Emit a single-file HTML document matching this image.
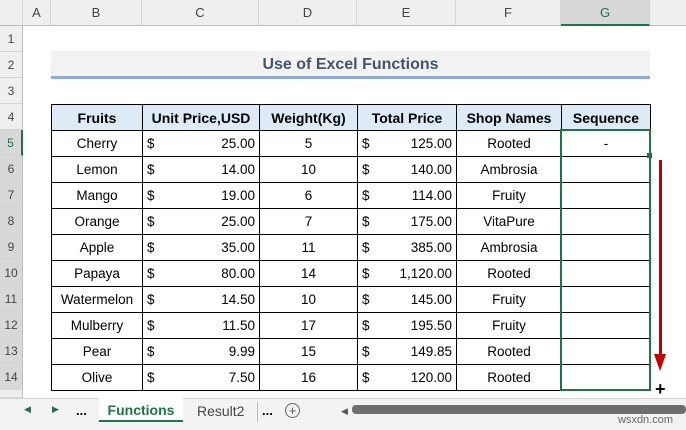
<!DOCTYPE html><html><head><style>
body{margin:0;width:686px;height:429px;overflow:hidden;background:#fff;font-family:"Liberation Sans",Calibri,sans-serif;position:relative}
.a{position:absolute}
.ch{top:0;height:26px;background:#efefef;border-bottom:1px solid #bdbdbd;font-size:13px;color:#444;text-align:center;line-height:26px;box-sizing:border-box;border-right:1px solid #d4d4d4}
.rh{left:0;width:23px;height:26px;background:#efefef;border-bottom:1px solid #d4d4d4;border-right:1px solid #bdbdbd;box-sizing:border-box;font-size:12px;color:#444;text-align:center;line-height:26px}
table{position:absolute;left:51px;top:104px;border-collapse:collapse;font-size:13.5px;table-layout:fixed;width:599px}
tr{height:26px}
td{border:1px solid #000;padding:0 4px;text-align:center;white-space:nowrap;overflow:hidden}
th{border:1px solid #000;background:#ddebf7;font-size:14px;white-space:nowrap;padding:0}
.d{text-align:left}.d span{float:right}
</style></head><body>
<div class="a ch" style="left:0;width:23px"></div>
<div class="a ch" style="left:23px;width:28px">A</div>
<div class="a ch" style="left:51px;width:91px">B</div>
<div class="a ch" style="left:142px;width:117px">C</div>
<div class="a ch" style="left:259px;width:98px">D</div>
<div class="a ch" style="left:357px;width:99px">E</div>
<div class="a ch" style="left:456px;width:105px">F</div>
<div class="a ch" style="left:561px;width:89px;background:#d8d8d8;border-bottom:2px solid #217346;color:#217346">G</div>
<div class="a ch" style="left:650px;width:36px;border-right:none"></div>
<div class="a rh" style="top:26px">1</div><div class="a rh" style="top:52px">2</div><div class="a rh" style="top:78px">3</div><div class="a rh" style="top:104px">4</div>
<div class="a rh" style="top:130px;background:#d8d8d8;border-right:2px solid #217346;color:#217346">5</div>
<div class="a rh" style="top:156px;background:#d8d8d8">6</div><div class="a rh" style="top:182px;background:#d8d8d8">7</div><div class="a rh" style="top:208px;background:#d8d8d8">8</div><div class="a rh" style="top:234px;background:#d8d8d8">9</div><div class="a rh" style="top:260px;background:#d8d8d8">10</div><div class="a rh" style="top:286px;background:#d8d8d8">11</div><div class="a rh" style="top:312px;background:#d8d8d8">12</div><div class="a rh" style="top:338px;background:#d8d8d8">13</div><div class="a rh" style="top:364px;background:#d8d8d8">14</div>
<div class="a rh" style="top:390px;height:8px"></div>
<div class="a" style="left:51px;top:51px;width:599px;height:25px;background:#f2f2f2;border-bottom:3px solid #8ea9db;text-align:center;font-weight:bold;font-size:16px;line-height:27px;color:#44546a">Use of Excel Functions</div>
<table>
<colgroup><col style="width:91px"><col style="width:117px"><col style="width:98px"><col style="width:99px"><col style="width:105px"><col style="width:89px"></colgroup>
<tr><th>Fruits</th><th>Unit Price,USD</th><th>Weight(Kg)</th><th>Total Price</th><th>Shop Names</th><th>Sequence</th></tr>
<tr><td>Cherry</td><td class="d">$<span>25.00</span></td><td>5</td><td class="d">$<span>125.00</span></td><td>Rooted</td><td>-</td></tr>
<tr><td>Lemon</td><td class="d">$<span>14.00</span></td><td>10</td><td class="d">$<span>140.00</span></td><td>Ambrosia</td><td></td></tr>
<tr><td>Mango</td><td class="d">$<span>19.00</span></td><td>6</td><td class="d">$<span>114.00</span></td><td>Fruity</td><td></td></tr>
<tr><td>Orange</td><td class="d">$<span>25.00</span></td><td>7</td><td class="d">$<span>175.00</span></td><td>VitaPure</td><td></td></tr>
<tr><td>Apple</td><td class="d">$<span>35.00</span></td><td>11</td><td class="d">$<span>385.00</span></td><td>Ambrosia</td><td></td></tr>
<tr><td>Papaya</td><td class="d">$<span>80.00</span></td><td>14</td><td class="d">$<span>1,120.00</span></td><td>Rooted</td><td></td></tr>
<tr><td>Watermelon</td><td class="d">$<span>14.50</span></td><td>10</td><td class="d">$<span>145.00</span></td><td>Fruity</td><td></td></tr>
<tr><td>Mulberry</td><td class="d">$<span>11.50</span></td><td>17</td><td class="d">$<span>195.50</span></td><td>Fruity</td><td></td></tr>
<tr><td>Pear</td><td class="d">$<span>9.99</span></td><td>15</td><td class="d">$<span>149.85</span></td><td>Rooted</td><td></td></tr>
<tr><td>Olive</td><td class="d">$<span>7.50</span></td><td>16</td><td class="d">$<span>120.00</span></td><td>Rooted</td><td></td></tr>
</table>
<div class="a" style="left:560px;top:129px;width:87px;height:258px;border:2px solid #217346"></div>
<div class="a" style="left:647px;top:153px;width:5px;height:5px;background:#217346"></div>
<div class="a" style="left:659px;top:160px;width:3px;height:195px;background:#c00000"></div>
<div class="a" style="left:654px;top:354px;width:0;height:0;border-left:6px solid transparent;border-right:6px solid transparent;border-top:17px solid #c00000"></div>
<div class="a" style="left:655px;top:382px;font-size:18px;font-weight:bold;line-height:14px">+</div>
<div class="a" style="left:0;top:398px;width:686px;height:31px;background:#f3f3f3;border-top:1px solid #d4d4d4;font-size:14px;color:#444"></div>
<div class="a" style="left:24px;top:404px;font-size:9px;color:#217346">◀</div>
<div class="a" style="left:52px;top:404px;font-size:9px;color:#217346">▶</div>
<div class="a" style="left:76px;top:403px;font-size:13px;font-weight:bold">...</div>
<div class="a" style="left:99px;top:398px;width:84px;height:22px;background:#fff;border-bottom:2px solid #217346;color:#217346;font-weight:bold;font-size:14px;text-align:center;line-height:24px">Functions</div>
<div class="a" style="left:197px;top:403px;font-size:14px;color:#444">Result2</div>
<div class="a" style="left:257px;top:402px;width:1px;height:20px;background:#bbb"></div>
<div class="a" style="left:262px;top:403px;font-size:13px;font-weight:bold">...</div>
<div class="a" style="left:285px;top:403px;width:13px;height:13px;border:1px solid #666;border-radius:50%;text-align:center;line-height:13px;font-size:13px;color:#555">+</div>
<div class="a" style="left:341px;top:406px;font-size:9px;color:#555">◀</div>
<div class="a" style="left:352px;top:405px;width:334px;height:9px;background:#6e6e6e;border-radius:4px"></div>
<div class="a" style="left:618px;top:414px;font-size:11px;color:#666">wsxdn.com</div>
</body></html>
